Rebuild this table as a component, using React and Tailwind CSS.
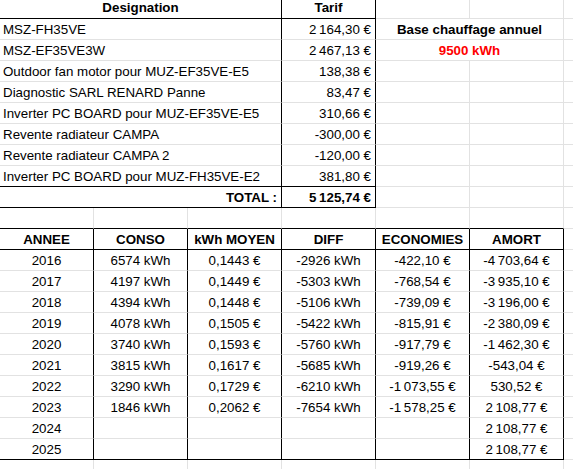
import React from 'react';
import clsx from 'clsx';

const N = '\u202F';

function Cell({ w = 'w-[94px]', r = false, b = false, align = 'center', bold = false, red = false, header = false, children }) {
  return (
    <div
      className={clsx(
        'shrink-0 box-border border-r border-b flex items-end whitespace-nowrap leading-[16px]',
        w,
        r ? 'border-r-black' : 'border-r-[#e2e2e2]',
        b ? 'border-b-black' : 'border-b-[#e2e2e2]',
        align === 'left' && 'justify-start pl-[3px]',
        align === 'right' && 'justify-end pr-[4px]',
        align === 'center' && 'justify-center',
        header ? 'pb-[2px]' : 'pb-[1px]',
        bold && 'font-bold',
        red && 'text-[#f00]'
      )}
    >
      {children}
    </div>
  );
}

function Filler() {
  return <div className="flex-1 border-b border-b-[#e2e2e2]" />;
}

const items = [
  ['MSZ-FH35VE', `2${N}164,30 €`],
  ['MSZ-EF35VE3W', `2${N}467,13 €`],
  ['Outdoor fan motor pour MUZ-EF35VE-E5', '138,38 €'],
  ['Diagnostic SARL RENARD Panne', '83,47 €'],
  ['Inverter PC BOARD pour MUZ-EF35VE-E5', '310,66 €'],
  ['Revente radiateur CAMPA', '-300,00 €'],
  ['Revente radiateur CAMPA 2', '-120,00 €'],
  ['Inverter PC BOARD pour MUZ-FH35VE-E2', '381,80 €'],
];

const years = [
  ['2016', '6574 kWh', '0,1443 €', '-2926 kWh', '-422,10 €', `-4${N}703,64 €`],
  ['2017', '4197 kWh', '0,1449 €', '-5303 kWh', '-768,54 €', `-3${N}935,10 €`],
  ['2018', '4394 kWh', '0,1448 €', '-5106 kWh', '-739,09 €', `-3${N}196,00 €`],
  ['2019', '4078 kWh', '0,1505 €', '-5422 kWh', '-815,91 €', `-2${N}380,09 €`],
  ['2020', '3740 kWh', '0,1593 €', '-5760 kWh', '-917,79 €', `-1${N}462,30 €`],
  ['2021', '3815 kWh', '0,1617 €', '-5685 kWh', '-919,26 €', '-543,04 €'],
  ['2022', '3290 kWh', '0,1729 €', '-6210 kWh', `-1${N}073,55 €`, '530,52 €'],
  ['2023', '1846 kWh', '0,2062 €', '-7654 kWh', `-1${N}578,25 €`, `2${N}108,77 €`],
  ['2024', '', '', '', '', `2${N}108,77 €`],
  ['2025', '', '', '', '', `2${N}108,77 €`],
];

export default function App() {
  return (
    <div className="w-[573px] h-[469px] overflow-hidden bg-white text-black text-[13.33px] font-['Liberation_Sans',Arial,sans-serif]">
      <div className="flex h-[19px]">
        <Cell w="w-[282px]" r b bold header>Designation</Cell>
        <Cell r b bold header>Tarif</Cell>
        <Cell header />
        <Cell header />
        <Filler />
      </div>
      {items.map(([d, t], i) => (
        <div key={i} className="flex h-[21px]">
          <Cell w="w-[282px]" r b={i === items.length - 1} align="left">{d}</Cell>
          <Cell r b={i === items.length - 1} align="right">{t}</Cell>
          {i === 0 ? (
            <Cell w="w-[188px]" bold>Base chauffage annuel</Cell>
          ) : i === 1 ? (
            <Cell w="w-[188px]" bold red>9500 kWh</Cell>
          ) : (
            <>
              <Cell />
              <Cell />
            </>
          )}
          <Filler />
        </div>
      ))}
      <div className="flex h-[21px]">
        <Cell w="w-[282px]" r b align="right" bold>TOTAL :</Cell>
        <Cell r b align="right" bold>{`5${N}125,74 €`}</Cell>
        <Cell />
        <Cell />
        <Filler />
      </div>
      <div className="flex h-[21px]">
        <Cell b />
        <Cell b />
        <Cell b />
        <Cell b />
        <Cell b />
        <Cell b />
        <Filler />
      </div>
      <div className="flex h-[21px]">
        {['ANNEE', 'CONSO', 'kWh MOYEN', 'DIFF', 'ECONOMIES', 'AMORT'].map((h) => (
          <Cell key={h} r b bold>{h}</Cell>
        ))}
        <Filler />
      </div>
      {years.map((row, i) => (
        <div key={row[0]} className="flex h-[21px]">
          {row.map((v, j) => (
            <Cell key={j} r b={i === years.length - 1}>{v}</Cell>
          ))}
          <Filler />
        </div>
      ))}
      <div className="flex h-[21px]">
        <Cell />
        <Cell />
        <Cell />
        <Cell />
        <Cell />
        <Cell />
        <Filler />
      </div>
    </div>
  );
}
